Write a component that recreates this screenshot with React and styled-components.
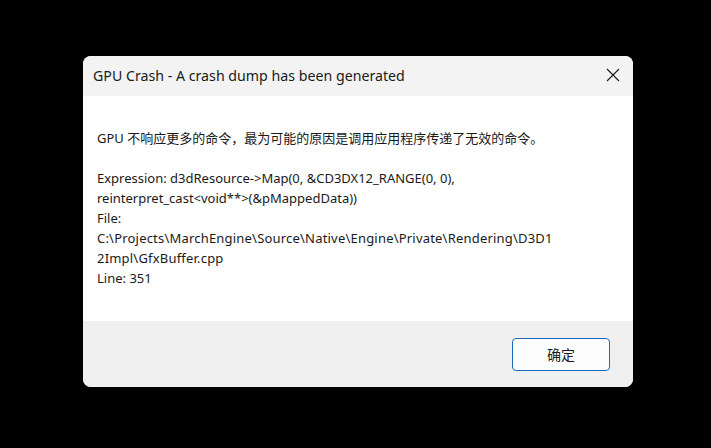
import React from 'react';
import styled, { createGlobalStyle } from 'styled-components';

const GlobalStyle = createGlobalStyle`
  html, body {
    margin: 0;
    padding: 0;
    background: #000;
  }
  body {
    width: 711px;
    height: 448px;
    overflow: hidden;
  }
`;

const Stage = styled.div`
  width: 711px;
  height: 448px;
  display: flex;
  align-items: flex-start;
  padding: 56px 0 0 83px;
  box-sizing: border-box;
  font-family: "Noto Sans", "Noto Sans CJK SC", sans-serif;
`;

const Dialog = styled.div`
  width: 550px;
  border-radius: 8px;
  overflow: hidden;
  background: #fff;
  display: flex;
  flex-direction: column;
`;

const TitleBar = styled.div`
  height: 40px;
  background: #f3f3f3;
  display: flex;
  align-items: center;
  justify-content: space-between;
  padding-left: 10px;
  padding-right: 3px;
`;

const Title = styled.span`
  font-size: 14.2px;
  color: #1a1a1a;
  margin-top: -2px;
`;

const CloseButton = styled.div`
  width: 34px;
  height: 30px;
  display: flex;
  align-items: center;
  justify-content: center;
  margin-top: -2px;
`;

const Body = styled.div`
  padding: 32px 14px 0 14px;
  height: 225px;
  box-sizing: border-box;
`;

const Message = styled.div`
  width: 460px;
  font-size: 13px;
  line-height: 20px;
  color: #1a1a1a;
  overflow-wrap: anywhere;
  white-space: pre-wrap;
`;

const Path = styled.span`
  letter-spacing: 0.2px;
`;

const Footer = styled.div`
  background: #f0f0f0;
  height: 66px;
  display: flex;
  align-items: center;
  justify-content: flex-end;
  padding-right: 23px;
`;

const OkButton = styled.button`
  width: 98px;
  height: 33px;
  border: 1px solid #1a6cb8;
  border-radius: 4px;
  background: #fdfdfd;
  font-family: "Noto Sans CJK SC", sans-serif;
  font-size: 14px;
  color: #1a1a1a;
  padding: 0;
`;

const App = () => {
  return (
    <>
      <GlobalStyle />
      <Stage>
        <Dialog>
          <TitleBar>
            <Title>GPU Crash - A crash dump has been generated</Title>
            <CloseButton>
              <svg width="14" height="14" viewBox="0 0 14 14">
                <path d="M1 1 L13 13 M13 1 L1 13" stroke="#1a1a1a" strokeWidth="1.1" fill="none" />
              </svg>
            </CloseButton>
          </TitleBar>
          <Body>
            <Message>
              {'GPU 不响应更多的命令，最为可能的原因是调用应用程序传递了无效的命令。\n\n'}
              {'Expression: d3dResource->Map(0, &CD3DX12_RANGE(0, 0), reinterpret_cast<void**>(&pMappedData))\n'}
              {'File: '}
              <Path>{'C:\\Projects\\MarchEngine\\Source\\Native\\Engine\\Private\\Rendering\\D3D12Impl\\GfxBuffer.cpp'}</Path>
              {'\nLine: 351'}
            </Message>
          </Body>
          <Footer>
            <OkButton>确定</OkButton>
          </Footer>
        </Dialog>
      </Stage>
    </>
  );
};

export default App;
